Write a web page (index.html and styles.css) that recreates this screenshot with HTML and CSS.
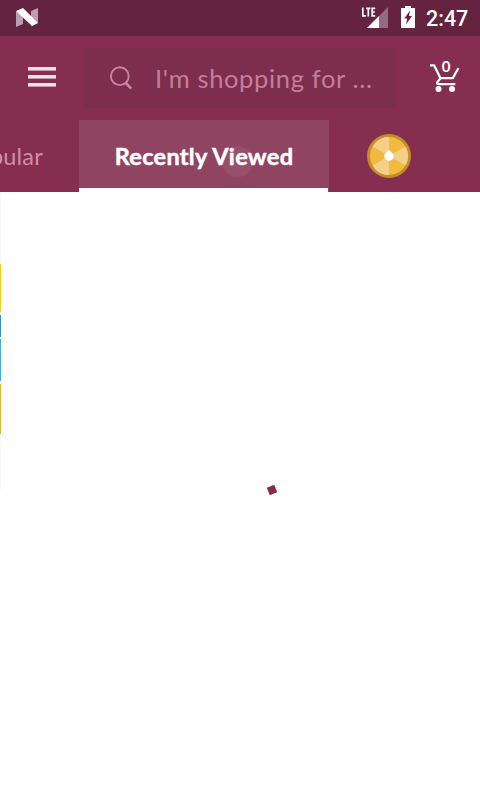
FILE: index.html
```html
<!DOCTYPE html>
<html lang="en">
<head>
<meta charset="utf-8">
<title>Shop</title>
<link rel="stylesheet" href="styles.css">
</head>
<body>
<div class="status">
  <svg class="n-logo" width="22" height="20" viewBox="0 0 22 20"><path fill="#bd9eae" d="M0 3l7 5v8l-7 3zM15 3l7-3v15l-7 3z"/><path fill="#fff" d="M0 3l7-3 15 15-6 3z"/></svg>
  <div class="status-right">
    <svg class="signal" width="28" height="22" viewBox="0 0 28 22"><path fill="#946b80" d="M27 1v21H6z"/><path fill="#fff" d="M6 22L18 10v12z"/><path class="lte-bg" d="M0 0h15v11H0z"/><path fill="none" stroke="#fff" stroke-width="1.7" d="M1.8 1.5v8.3h3M5.2 2.3h4.2M7.3 2.3v8.3M14.2 2.3h-3v7.5h3M11.2 6h2.6"/></svg>
    <svg class="battery" width="14" height="22" viewBox="0 0 14 22"><path fill="#fff" d="M4 0h6v2h4v20H0V2h4z"/><path fill="#64233e" d="M9 4.5L3.3 12.5H6.2L5 18.5 11 10H8z"/></svg>
    <span class="clock">2:47</span>
  </div>
</div>
<header class="toolbar">
  <div class="menu"><i></i><i></i><i></i></div>
  <div class="search">
    <svg class="lens" width="24" height="25" viewBox="0 0 24 25"><g fill="none" stroke="#c886a3"><circle cx="10.8" cy="10.2" r="8.9" stroke-width="1.9"/><path stroke-width="2.6" d="M16.4 16.5l5.8 6.1"/></g></svg>
    <span class="hint">I'm shopping for ...</span>
  </div>
  <div class="cart">
    <svg width="30" height="32" viewBox="0 0 30 32"><path fill="none" stroke="#fff" stroke-width="2.3" stroke-linejoin="round" d="M0 3.4h4.2l6.3 12.8h12.2l5.7-10M10.5 16.2l-3.2 4c-.6 1 0 1.9 1 1.9h17"/><circle cx="8.5" cy="27" r="3" fill="#fff"/><circle cx="22" cy="27" r="3" fill="#fff"/></svg>
    <span class="count">0</span>
  </div>
</header>
<nav class="tabs">
  <div class="tab popular"><span>Popular</span></div>
  <div class="tab active"><span class="ripple"></span><span class="label">Recently Viewed</span></div>
  <div class="tab wheel">
    <svg width="44" height="44" viewBox="-22 -22 44 44"><circle r="22" fill="#c48c2b"/><circle r="19" fill="#f1b93d"/><g fill="#f4cf87"><path d="M0 0V-19A19 19 0 0 0-16.5-9.5z"/><path d="M0 0L16.5-9.5A19 19 0 0 1 16.5 9.5z"/><path d="M0 0L-16.5 9.5A19 19 0 0 0 0 19z"/></g><path fill="#fff" d="M0-6.5C1-4.5 4.8-3 4.8 0a4.8 4.8 0 0 1-9.6 0C-4.8-3-1-4.5 0-6.5z"/></svg>
  </div>
</nav>
<main class="page">
  <div class="edge"><i class="blank"></i><i class="yellow"></i><i class="blue"></i><i class="cyan"></i><i class="gold"></i><i class="tail"></i></div>
  <div class="spinner"></div>
</main>
</body>
</html>
```
FILE: styles.css
```css
* { box-sizing: border-box; }
body { margin: 0; width: 480px; height: 800px; overflow: hidden; background: #fefefe; font-family: Lato, sans-serif; }
svg { display: block; flex: none; }
.status { height: 36px; background: #64233e; display: flex; justify-content: space-between; padding: 7px 12px 0 16px; }
.n-logo { margin-top: 1px; }
.status-right { display: flex; }
.signal { margin-top: -1px; }
.lte-bg { fill: #64233e; }
.battery { margin: -1px 11px 0 12px; }
.clock { font: 500 21.5px/24px Roboto, sans-serif; color: #fff; width: 42px; white-space: nowrap; }
.toolbar { height: 84px; background: #852e50; display: flex; padding-top: 12px; }
.menu { width: 28px; margin: 19px 28px 0; display: flex; flex-direction: column; gap: 4px; }
.menu i { flex: none; height: 4px; background: #f0e2e9; border-bottom: 1px solid #c69aad; }
.search { width: 312px; height: 60px; background: #7c2e4c; display: flex; padding-left: 25px; }
.lens { margin-top: 18px; }
.hint { margin-left: 22px; font-size: 25.5px; line-height: 61px; letter-spacing: .65px; color: #c47e9c; white-space: nowrap; }
.cart { position: relative; margin: 14px 0 0 34px; width: 30px; height: 32px; }
.count { position: absolute; left: 10px; top: -4px; width: 12px; text-align: center; font: bold 15px/16px Lato, sans-serif; color: #fff; }
.tabs { height: 72px; background: #852e50; display: flex; }
.popular { width: 79px; display: flex; justify-content: flex-end; padding-right: 36px; font-size: 23.5px; line-height: 73px; color: #d18daa; letter-spacing: .2px; }
.active { position: relative; width: 250px; background: #8f4562; text-align: center; font-size: 23.5px; line-height: 72px; font-weight: 700; color: #fff; }
.active::after { content: ""; position: absolute; left: 0; bottom: 0; width: 249px; height: 4px; background: #fff; }
.label { position: relative; white-space: nowrap; letter-spacing: .3px; -webkit-text-stroke: .5px #fff; }
.ripple { position: absolute; left: 143px; top: 26px; width: 31px; height: 31px; border-radius: 50%; background: #96506b; }
.wheel { padding: 14px 0 0 38px; }
.page { height: 608px; position: relative; }
.edge { width: 1px; display: flex; flex-direction: column; }
.blank { height: 72px; background: #f8f8f8; }
.yellow { height: 48px; background: #f8cc16; }
.blue { height: 22px; margin-top: 3px; background: #3792cf; }
.cyan { height: 42px; margin-top: 2px; background: #43afe1; }
.gold { height: 50px; margin-top: 3px; background: #e6b32a; }
.tail { height: 56px; background: #f8f8f8; }
.spinner { position: absolute; left: 268px; top: 294px; width: 8px; height: 8px; background: #852e50; transform: rotate(-22deg); }
```
